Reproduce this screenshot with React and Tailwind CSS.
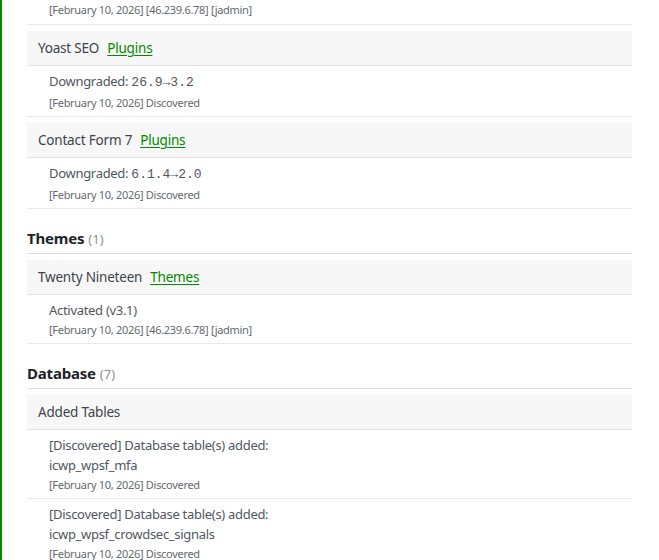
import React from 'react';

const sans = { fontFamily: '"Noto Sans", "Open Sans", sans-serif' };

function Meta({ children }) {
    return <div className="text-[11px] leading-[20px] tracking-[-0.3px] text-[#646970]">{children}</div>;
}

function Item({ title, tag, children }) {
    return (
        <div className="mt-[6px]">
            <div className="h-[35px] flex items-center gap-[8px] px-[11px] bg-[#f7f7f7] border-b border-[#e2e2e2] text-[13.5px] tracking-[-0.2px] text-[#3c434a]">
                <span>{title}</span>
                {tag && <a href="#" className="text-[#008a00] underline underline-offset-2">{tag}</a>}
            </div>
            {children}
        </div>
    );
}

function Entry({ children, meta }) {
    return (
        <div className="pl-[22px] pt-[5px] pb-[3px] border-b border-[#e8e8e8]">
            <div className="text-[13px] leading-[20px] tracking-[-0.3px] text-[#50575e]">{children}</div>
            <Meta>{meta}</Meta>
        </div>
    );
}

function Mono({ children }) {
    return <span className="font-['Liberation_Mono',monospace] text-[13px] tracking-normal">{children}</span>;
}

function Section({ title, count, className, children }) {
    return (
        <div className={className}>
            <div className="flex items-baseline gap-[4px] pb-[4px] border-b border-[#dcdcde] leading-[20px]">
                <span className="text-[15px] font-bold tracking-[-0.2px] text-[#1d2327]">{title}</span>
                <span className="text-[13px] text-[#8c8f94]">({count})</span>
            </div>
            {children}
        </div>
    );
}

export default function App() {
    return (
        <div style={sans} className="h-[560px] overflow-hidden bg-white border-l-2 border-[#008a00] pl-[25px] pr-[27px]">
            <div className="pl-[22px] pb-[4px] border-b border-[#e8e8e8]">
                <Meta>[February 10, 2026] [46.239.6.78] [jadmin]</Meta>
            </div>

            <Item title="Yoast SEO" tag="Plugins">
                <Entry meta="[February 10, 2026] Discovered">
                    Downgraded: <Mono>26.9→3.2</Mono>
                </Entry>
            </Item>

            <Item title="Contact Form 7" tag="Plugins">
                <Entry meta="[February 10, 2026] Discovered">
                    Downgraded: <Mono>6.1.4→2.0</Mono>
                </Entry>
            </Item>

            <Section title="Themes" count={1} className="mt-[19px]">
                <Item title="Twenty Nineteen" tag="Themes">
                    <Entry meta="[February 10, 2026] [46.239.6.78] [jadmin]">Activated (v3.1)</Entry>
                </Item>
            </Section>

            <Section title="Database" count={7} className="mt-[19px]">
                <Item title="Added Tables">
                    <Entry meta="[February 10, 2026] Discovered">
                        [Discovered] Database table(s) added:<br />icwp_wpsf_mfa
                    </Entry>
                    <Entry meta="[February 10, 2026] Discovered">
                        [Discovered] Database table(s) added:<br />icwp_wpsf_crowdsec_signals
                    </Entry>
                </Item>
            </Section>
        </div>
    );
}
